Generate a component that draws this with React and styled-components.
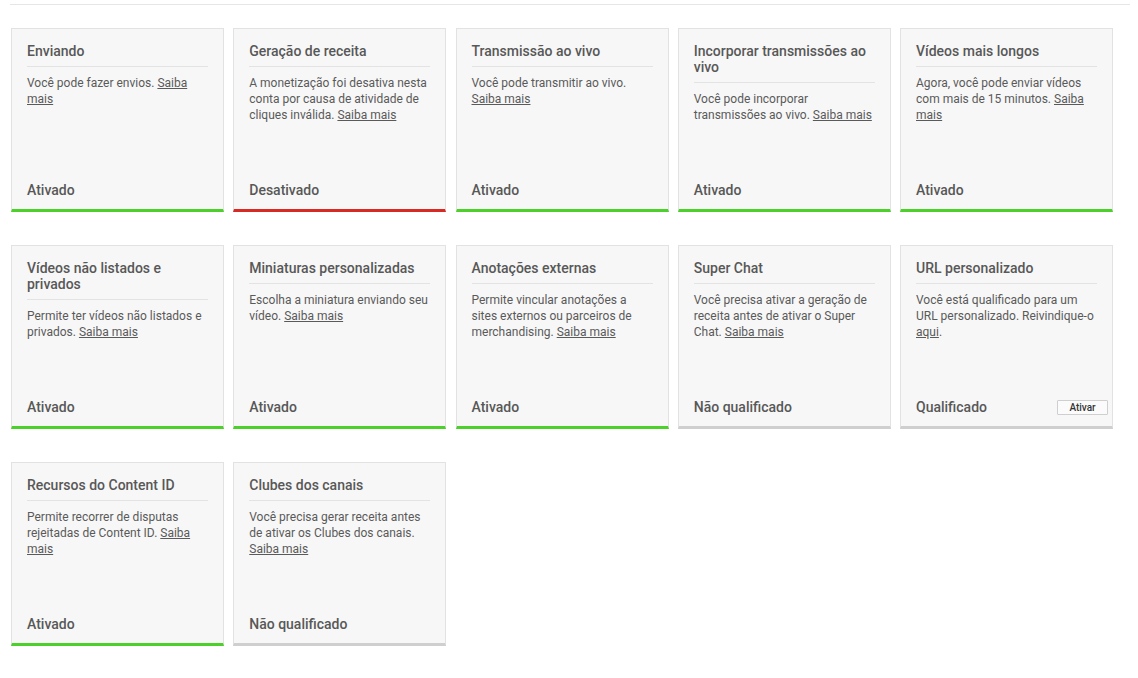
import React from 'react';
import styled, { createGlobalStyle } from 'styled-components';

const GlobalStyle = createGlobalStyle`
  body {
    margin: 0;
    background: #fff;
    font-family: Roboto, "Noto Sans", Arial, sans-serif;
  }
`;

const Page = styled.div`
  padding: 4px 8px 0 10px;
`;

const TopRule = styled.div`
  width: 1120px;
  border-top: 1px solid #e6e6e6;
`;

const Grid = styled.div`
  display: grid;
  grid-template-columns: repeat(5, 213px);
  column-gap: 9.25px;
  row-gap: 33px;
  margin-top: 23px;
  padding-left: 1px;
`;

const barColors = {
  on: '#4cd02a',
  off: '#d82a23',
  none: '#cfcfcf',
};

const Card = styled.div`
  box-sizing: border-box;
  height: 184px;
  display: flex;
  flex-direction: column;
  background: #f7f7f7;
  border: 1px solid #e2e2e2;
  border-bottom: 3px solid ${p => barColors[p.status]};
  padding: 14px 15px 11px;
`;

const Title = styled.div`
  font-size: 14px;
  font-weight: 500;
  line-height: 16px;
  color: #585858;
  padding-bottom: 7px;
  border-bottom: 1px solid #e3e3e3;
`;

const Body = styled.div`
  margin-top: 8px;
  font-size: 12px;
  line-height: 16px;
  color: #5a5a5a;

  a {
    color: #5a5a5a;
    text-decoration: underline;
  }
`;

const Footer = styled.div`
  margin-top: auto;
  display: flex;
  align-items: center;
  justify-content: space-between;
  font-size: 14px;
  font-weight: 500;
  line-height: 16px;
  color: #585858;
`;

const Button = styled.button`
  box-sizing: border-box;
  width: 51px;
  height: 15px;
  margin-right: -11px;
  padding: 0;
  background: #fbfbfb;
  border: 1px solid #cfcfcf;
  border-radius: 1px;
  font-family: Roboto, Arial, sans-serif;
  font-size: 10px;
  font-weight: 500;
  line-height: 13px;
  color: #333;
`;

const Link = ({ children }) => <a href="#">{children}</a>;

const features = [
  { title: 'Enviando', text: <>Você pode fazer envios. <Link>Saiba mais</Link></>, label: 'Ativado', status: 'on' },
  { title: 'Geração de receita', text: <>A monetização foi desativa nesta conta por causa de atividade de cliques inválida. <Link>Saiba mais</Link></>, label: 'Desativado', status: 'off' },
  { title: 'Transmissão ao vivo', text: <>Você pode transmitir ao vivo. <Link>Saiba mais</Link></>, label: 'Ativado', status: 'on' },
  { title: 'Incorporar transmissões ao vivo', text: <>Você pode incorporar transmissões ao vivo. <Link>Saiba mais</Link></>, label: 'Ativado', status: 'on' },
  { title: 'Vídeos mais longos', text: <>Agora, você pode enviar vídeos com mais de 15 minutos. <Link>Saiba mais</Link></>, label: 'Ativado', status: 'on' },
  { title: 'Vídeos não listados e privados', text: <>Permite ter vídeos não listados e privados. <Link>Saiba mais</Link></>, label: 'Ativado', status: 'on' },
  { title: 'Miniaturas personalizadas', text: <>Escolha a miniatura enviando seu vídeo. <Link>Saiba mais</Link></>, label: 'Ativado', status: 'on' },
  { title: 'Anotações externas', text: <>Permite vincular anotações a sites externos ou parceiros de merchandising. <Link>Saiba mais</Link></>, label: 'Ativado', status: 'on' },
  { title: 'Super Chat', text: <>Você precisa ativar a geração de receita antes de ativar o Super Chat. <Link>Saiba mais</Link></>, label: 'Não qualificado', status: 'none' },
  { title: 'URL personalizado', text: <>Você está qualificado para um URL personalizado. Reivindique-o <Link>aqui</Link>.</>, label: 'Qualificado', status: 'none', action: 'Ativar' },
  { title: 'Recursos do Content ID', text: <>Permite recorrer de disputas rejeitadas de Content ID. <Link>Saiba mais</Link></>, label: 'Ativado', status: 'on' },
  { title: 'Clubes dos canais', text: <>Você precisa gerar receita antes de ativar os Clubes dos canais. <Link>Saiba mais</Link></>, label: 'Não qualificado', status: 'none' },
];

export default function App() {
  return (
    <Page>
      <GlobalStyle />
      <TopRule />
      <Grid>
        {features.map(f => (
          <Card key={f.title} status={f.status}>
            <Title>{f.title}</Title>
            <Body>{f.text}</Body>
            <Footer>
              <span>{f.label}</span>
              {f.action ? <Button>{f.action}</Button> : null}
            </Footer>
          </Card>
        ))}
      </Grid>
    </Page>
  );
}
